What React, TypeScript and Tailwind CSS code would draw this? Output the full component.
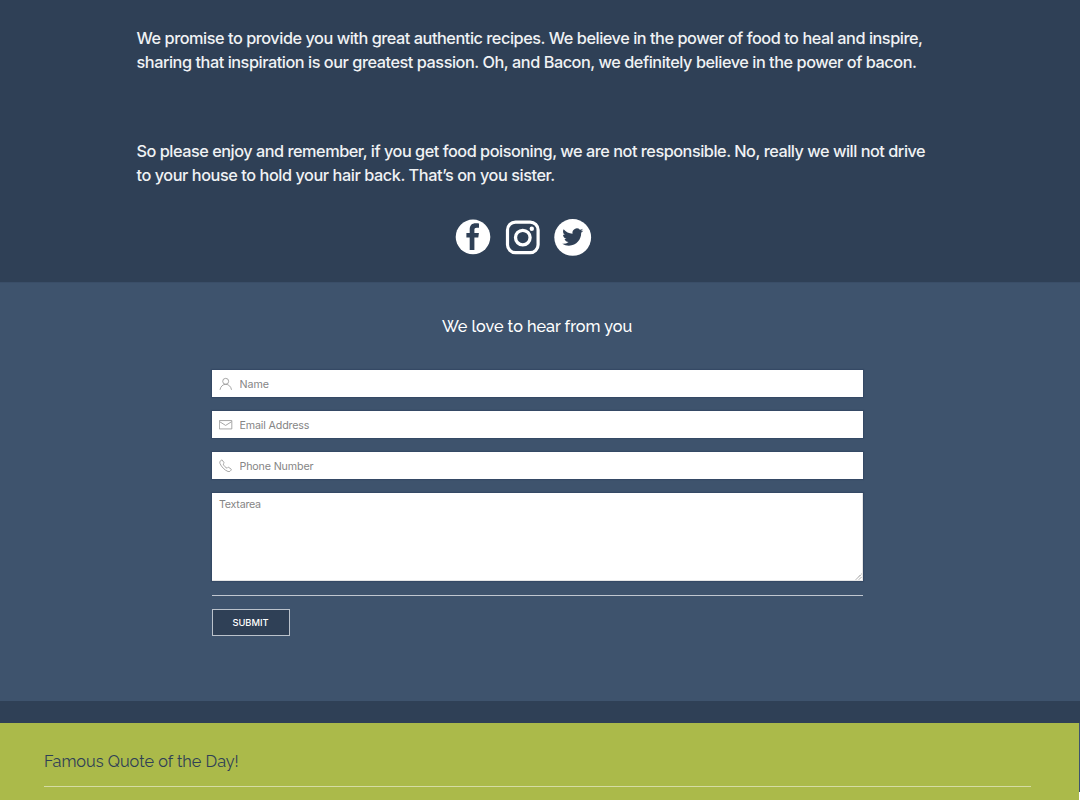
import React from 'react';

const fields = [
  {
    label: 'Name',
    spacing: 'tracking-[-0.08px]',
    icon: (
      <>
        <circle cx="9.9" cy="6.4" r="4.4" />
        <path d="M1.5 19c.7-4.8 4.2-8.2 8.5-8.2s7.800 3.400 8.500 8.200" />
      </>
    ),
  },
  {
    label: 'Email Address',
    spacing: 'tracking-[-0.15px]',
    icon: (
      <>
        <path d="M.5 3.800h18.500v12.400H.5z" />
        <path d="m1 5.500 8.800 5.500 8.800-5.500" />
      </>
    ),
  },
  {
    label: 'Phone Number',
    spacing: 'tracking-[-0.15px]',
    icon: (
      <path d="M16.500 18c-.8.8-2 1-3.200.5C8.500 16.700 3.400 11.500 1.400 6.500.9 5.200 1.100 4 1.900 3.200l1.500-1.500c.4-.4 1-.4 1.400 0l2.500 3.500c.4.500.3 1-.1 1.400l-1 1c.9 2.500 3.500 5.100 5.800 6l1-1c.4-.4 1-.5 1.500-.1l3.500 2.500c.4.400.4 1 0 1.500z" />
    ),
  },
];

export default function App() {
  return (
    <div className="flex h-[800px] w-[1080px] flex-col overflow-hidden bg-[#2f4056] font-['Inter',sans-serif]">
      <section className="h-[282px] shrink-0 pr-[135px] pl-[136.500px] pt-[26px] text-[16.300px] leading-[24px] font-medium text-[#f0f2f4]">
        <p className="whitespace-nowrap">
          <span className="block tracking-[-0.46px]">We promise to provide you with great authentic recipes. We believe in the power of food to heal and inspire,</span>
          <span className="block tracking-[-0.46px]">sharing that inspiration is our greatest passion. Oh, and Bacon, we definitely believe in the power of bacon.</span>
        </p>
        <p className="mt-[65px] whitespace-nowrap">
          <span className="block tracking-[-0.48px]">So please enjoy and remember, if you get food poisoning, we are not responsible. No, really we will not drive</span>
          <span className="block tracking-[-0.44px]">to your house to hold your hair back. That’s on you sister.</span>
        </p>
        <div className="mt-[31px] ml-[318.500px] flex items-center">
          <svg width="36" height="36" viewBox="0 0 36 36" aria-label="Facebook">
            <circle cx="18" cy="17.900" r="17.300" fill="#fff" />
            <path fill="#2f4056" d="M14.700 31V18.500h-3.300V14h3.300v-3.300c0-4.400 2.200-6.400 6-6.400 1.300 0 2.500.1 3.300.3v4.200h-2.300c-1.700 0-2.300.8-2.300 2.200v3h4.500l-.6 4.500h-3.900V31z" />
          </svg>
          <svg className="ml-[14px]" width="36" height="36" viewBox="0 0 36 36" fill="none" stroke="#fff" aria-label="Instagram">
            <rect x="2.500" y="3.100" width="30.600" height="30.600" rx="8" strokeWidth="3.200" />
            <circle cx="17.800" cy="18.600" r="7.300" strokeWidth="3.300" />
            <circle cx="26.800" cy="9.800" r="2.200" fill="#fff" stroke="none" />
          </svg>
          <svg className="ml-[13px]" width="38" height="38" viewBox="0 0 38 38" aria-label="Twitter">
            <circle cx="18.700" cy="19.400" r="18.400" fill="#fff" />
            <path transform="translate(8.200 8.500) scale(.88)" fill="#2f4056" d="M23.953 4.570a10 10 0 0 1-2.825.775 4.958 4.958 0 0 0 2.163-2.723c-.951.555-2.005.959-3.127 1.184a4.920 4.920 0 0 0-8.384 4.482C7.690 8.095 4.067 6.130 1.640 3.162a4.822 4.822 0 0 0-.666 2.475c0 1.710.870 3.213 2.188 4.096a4.904 4.904 0 0 1-2.228-.616v.060a4.923 4.923 0 0 0 3.946 4.827 4.996 4.996 0 0 1-2.212.085 4.936 4.936 0 0 0 4.604 3.417 9.867 9.867 0 0 1-6.102 2.105c-.390 0-.779-.023-1.170-.067a13.995 13.995 0 0 0 7.557 2.209c9.053 0 13.998-7.496 13.998-13.985 0-.210 0-.420-.015-.630a9.935 9.935 0 0 0 2.460-2.548z" />
          </svg>
        </div>
      </section>
      <section className="h-[419px] shrink-0 border-t border-[#3a4e68] bg-[#3e536d] pt-[32px] pr-[217.500px] pl-[211.500px]">
        <h2 className="text-center font-['Raleway','Lato',sans-serif] text-[16.200px] leading-[24px] font-medium text-white">We love to hear from you</h2>
        <form className="mt-[31px]">
          <div className="flex flex-col gap-[14px]">
            {fields.map(({ label, spacing, icon }) => (
              <label key={label} className="flex h-[27px] items-center bg-white pl-[7.500px] shadow-[0_0_1px_1px_#354965]">
                <svg className="shrink-0" width="13.500" height="13.500" viewBox="0 0 20 20" fill="none" stroke="#999" strokeWidth="1.300">{icon}</svg>
                <input aria-label={label} placeholder={label} className={`ml-[7px] w-full bg-transparent pt-[3px] text-[10.700px] text-[#858585] outline-none placeholder:text-[#858585] ${spacing}`} />
              </label>
            ))}
            <div className="grid">
              <textarea aria-label="Message" placeholder="Textarea" className="col-start-1 row-start-1 block h-[88px] resize-none border-r border-b border-[#e5e5e5] bg-white px-[7.500px] pt-[4px] text-[10.700px] leading-[16px] tracking-[-0.250px] shadow-[0_0_1px_1px_#354965] outline-none placeholder:text-[#858585]" />
              <svg className="z-10 col-start-1 row-start-1 mr-[1px] mb-[1px] self-end justify-self-end" width="7" height="7" viewBox="0 0 7 7" stroke="#777" strokeWidth="1" strokeDasharray="1.200 .500">
                <path d="M1 6.500 6.500 1M4 6.500 6.500 4" />
              </svg>
            </div>
          </div>
          <div className="mt-[14px] h-px bg-[#c1c7d0]" />
          <button type="button" className="mt-[13px] block h-[27px] w-[78px] border border-[#bbc2cb] bg-[#2f4056] text-[9.300px] font-medium text-white">SUBMIT</button>
        </form>
      </section>
      <div className="flex grow border-t-[22px] border-[#2f4056]">
        <section className="grow bg-[#abba4a] pt-[27px] pr-[48px] pl-[44px]">
          <h2 className="font-['Raleway','Lato',sans-serif] text-[16.300px] leading-[24px] text-[#2f4056]">Famous Quote of the Day!</h2>
          <div className="mt-[12px] h-px bg-[#d5dca4]" />
        </section>
        <div className="w-px bg-white">
          <div className="h-[69px] bg-[#3e536d]" />
        </div>
      </div>
    </div>
  );
}
